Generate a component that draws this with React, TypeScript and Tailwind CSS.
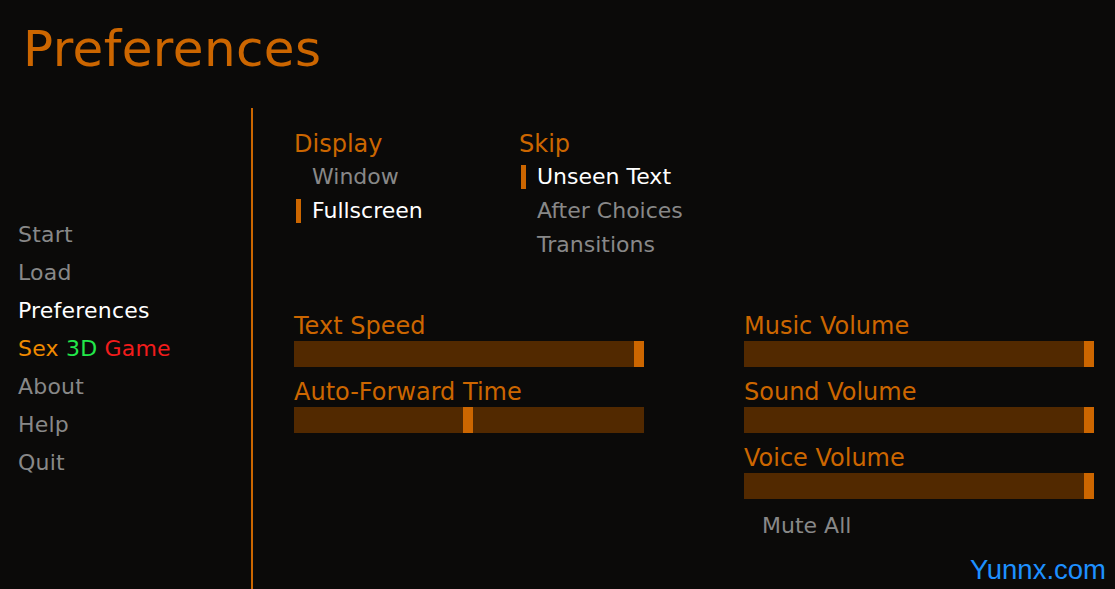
import React from 'react';

const accent = 'text-[#cc6600]';

type Opt = { label: string; selected?: boolean };

const displayOpts: Opt[] = [{ label: 'Window' }, { label: 'Fullscreen', selected: true }];
const skipOpts: Opt[] = [
    { label: 'Unseen Text', selected: true },
    { label: 'After Choices' },
    { label: 'Transitions' },
];

const sliders = {
    left: [
        { label: 'Text Speed', value: 1 },
        { label: 'Auto-Forward Time', value: 0.497 },
    ],
    right: [
        { label: 'Music Volume', value: 1 },
        { label: 'Sound Volume', value: 1 },
        { label: 'Voice Volume', value: 1 },
    ],
};

const OptionButton = ({ opt }: { opt: Opt }) => (
    <div className="flex h-[34px] items-center">
        <div className={`ml-[2px] h-[24px] w-[5px] ${opt.selected ? 'bg-[#cc6600]' : ''}`} />
        <span
            className={`ml-[11px] text-[22px] leading-[34px] ${opt.selected ? 'text-white' : 'text-[#888888]'}`}
        >
            {opt.label}
        </span>
    </div>
);

const Slider = ({ label, value }: { label: string; value: number }) => (
    <div className="mb-[10px]">
        <div className={`h-[30px] text-[24px] leading-[30px] ${accent}`}>{label}</div>
        <div className="flex h-[26px] w-[350px] bg-[#522900]">
            {/* thumb travels over the bar width minus its own 10px */}
            <div style={{ width: `${value * 340}px` }} />
            <div className="h-full w-[10px] bg-[#cc6600]" />
        </div>
    </div>
);

const navItems = ['Start', 'Load', 'Preferences', 'Sex 3D Game', 'About', 'Help', 'Quit'];

const App = () => {
    return (
        <div
            className="relative h-[589px] w-[1115px] overflow-hidden bg-[#0b0a09]"
            style={{ fontFamily: '"DejaVu Sans", sans-serif' }}
        >
            {/* --- Title --- */}
            <div className={`mt-[24px] h-[50px] pl-[23px] text-[50px] leading-[50px] tracking-[0.4px] ${accent}`}>
                Preferences
            </div>

            <div className="mt-[34px] flex h-[481px]">
                {/* --- Navigation --- */}
                <div className="w-[251px] pl-[18px] pt-[108px]">
                    {navItems.map((item) => (
                        <div key={item} className="h-[38px] text-[22px] leading-[38px] tracking-[0.2px]">
                            {item === 'Sex 3D Game' ? (
                                <>
                                    <span className="text-[#f08a00]">Sex</span>{' '}
                                    <span className="text-[#22e84a]">3D</span>{' '}
                                    <span className="text-[#f21c1c]">Game</span>
                                </>
                            ) : (
                                <span className={item === 'Preferences' ? 'text-white' : 'text-[#888888]'}>
                                    {item}
                                </span>
                            )}
                        </div>
                    ))}
                </div>

                <div className="w-[2px] bg-[#cc6600]" />

                {/* --- Settings --- */}
                <div className="pl-[41px] pt-[21px]">
                    <div className="flex">
                        <div className="w-[225px]">
                            <div className={`h-[31px] text-[24px] leading-[31px] ${accent}`}>Display</div>
                            {displayOpts.map((o) => (
                                <OptionButton key={o.label} opt={o} />
                            ))}
                        </div>
                        <div>
                            <div className={`h-[31px] text-[24px] leading-[31px] ${accent}`}>Skip</div>
                            {skipOpts.map((o) => (
                                <OptionButton key={o.label} opt={o} />
                            ))}
                        </div>
                    </div>

                    <div className="mt-[49px] flex">
                        <div className="w-[450px]">
                            {sliders.left.map((s) => (
                                <Slider key={s.label} {...s} />
                            ))}
                        </div>
                        <div>
                            {sliders.right.map((s) => (
                                <Slider key={s.label} {...s} />
                            ))}
                            <div className="mt-[2px] h-[34px] pl-[18px] text-[22px] leading-[34px] text-[#888888]">
                                Mute All
                            </div>
                        </div>
                    </div>
                </div>
            </div>

            {/* --- Watermark --- */}
            <div
                className="absolute bottom-[4px] right-[9px] text-[27.5px] leading-[30px] text-[#1e90ff]"
                style={{ fontFamily: '"Liberation Sans", Arial, sans-serif' }}
            >
                Yunnx.com
            </div>
        </div>
    );
};

export default App;
